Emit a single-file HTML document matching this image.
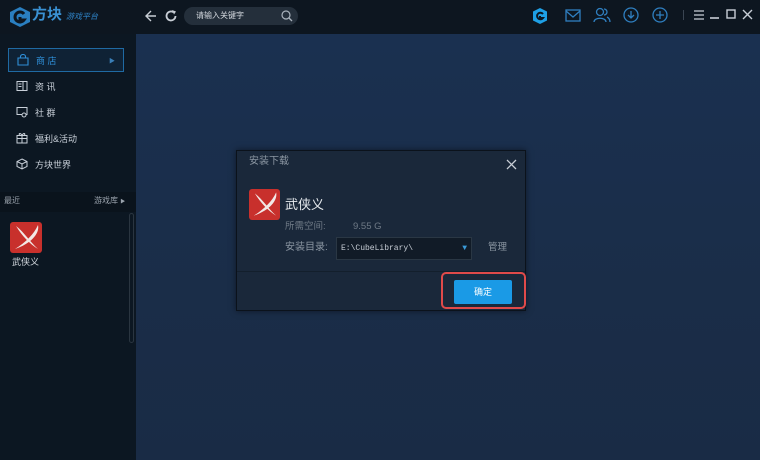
<!DOCTYPE html>
<html><head><meta charset="utf-8"><style>
*{margin:0;padding:0;box-sizing:border-box}
body{width:760px;height:460px;overflow:hidden;background:#1a2d48;font-family:"Liberation Sans","Noto Sans CJK SC",sans-serif;font-size:11px;color:#c5ccd6;position:relative}
.top{position:absolute;left:0;top:0;width:760px;height:34px;background:#0d1620}
.side{position:absolute;left:0;top:34px;width:136px;height:426px;background:#0c1722}
.main{position:absolute;left:136px;top:34px;width:624px;height:426px;background:linear-gradient(#1a3050,#1a2d48 60%,#192b45)}
.nav{position:absolute;left:8px;width:116px;height:24px;display:flex;align-items:center;padding-left:8px;font-size:9px;color:#c9d0d9}
.nav svg{margin-right:7px}
.abs{position:absolute;line-height:1.2}
.dlg{position:absolute;left:236px;top:150px;width:290px;height:161px;background:#1a283a;border:1px solid #0b121b;box-shadow:0 0 6px rgba(0,0,0,.5)}
.icon{background:#c8302c;border-radius:3px}
</style></head><body>
<div class="top"></div>
<div class="side"></div>
<div class="main"></div>
<svg class="abs" style="left:8px;top:6px" width="24" height="22" viewBox="0 0 24 22"><path d="M12 1 L22 6 V16 L12 21 L2 16 V6Z" fill="#2a7fc1"/><path d="M16 8 A5 5 0 1 0 16 14 H12 V11" stroke="#0d1620" stroke-width="3" fill="none"/></svg>
<div class="abs" style="left:32px;top:6px;font-size:15px;font-weight:bold;color:#3a91d3">方块</div>
<div class="abs" style="left:66px;top:12px;font-size:8px;color:#2f84c8;font-style:italic">游戏平台</div>
<svg class="abs" style="left:144px;top:9px" width="14" height="14" viewBox="0 0 14 14"><path d="M12 7H2M7 2L2 7L7 12" stroke="#c8ced6" stroke-width="1.4" fill="none"/></svg>
<svg class="abs" style="left:164px;top:9px" width="14" height="14" viewBox="0 0 14 14"><path d="M11.5 7A4.5 4.5 0 1 1 9.5 3.2" stroke="#c8ced6" stroke-width="1.8" fill="none"/><path d="M8 1L12 2.5L10 5.5Z" fill="#c8ced6"/></svg>
<div class="abs" style="left:184px;top:7px;width:114px;height:18px;border-radius:9px;background:#242f3b;font-size:8px;color:#d4d9df;padding:4px 0 0 12px">请输入关键字</div>
<svg class="abs" style="left:281px;top:10px" width="12" height="12" viewBox="0 0 12 12"><circle cx="5" cy="5" r="4" stroke="#aab3bd" stroke-width="1.2" fill="none"/><path d="M8 8L11 11" stroke="#aab3bd" stroke-width="1.3"/></svg>
<svg class="abs" style="left:531px;top:7px" width="18" height="18" viewBox="0 0 18 18"><path d="M9 1L16 4.5V13.5L9 17L2 13.5V4.5Z" fill="#1ea0e6"/><path d="M12 7A3.3 3.3 0 1 0 12 11H9V9" stroke="#0d1620" stroke-width="2" fill="none"/></svg>
<svg class="abs" style="left:565px;top:9px" width="16" height="13" viewBox="0 0 16 13"><rect x="1" y="1" width="14" height="11" stroke="#2f7fc0" stroke-width="1.3" fill="none"/><path d="M1 2L8 8L15 2" stroke="#2f7fc0" stroke-width="1.3" fill="none"/></svg>
<svg class="abs" style="left:593px;top:7px" width="18" height="16" viewBox="0 0 18 16"><circle cx="7" cy="5" r="3.5" stroke="#2f7fc0" stroke-width="1.3" fill="none"/><path d="M1 15C1 10 13 10 13 15M11 2A3 3 0 0 1 11 8M14 10C16 11 17 13 17 15" stroke="#2f7fc0" stroke-width="1.3" fill="none"/></svg>
<svg class="abs" style="left:623px;top:7px" width="16" height="16" viewBox="0 0 16 16"><circle cx="8" cy="8" r="7" stroke="#2f7fc0" stroke-width="1.3" fill="none"/><path d="M8 4V11M5 8L8 11L11 8" stroke="#2f7fc0" stroke-width="1.3" fill="none"/></svg>
<svg class="abs" style="left:652px;top:7px" width="16" height="16" viewBox="0 0 16 16"><circle cx="8" cy="8" r="7" stroke="#2f7fc0" stroke-width="1.3" fill="none"/><path d="M8 4V12M4 8H12" stroke="#2f7fc0" stroke-width="1.3"/></svg>
<div class="abs" style="left:683px;top:10px;width:1px;height:10px;background:#3a4552"></div>
<svg class="abs" style="left:693px;top:8px" width="64" height="14" viewBox="0 0 64 14"><path d="M1 3H11M1 7H11M1 11H11" stroke="#c8ced6" stroke-width="1.3"/><path d="M17 10H26" stroke="#c8ced6" stroke-width="1.6"/><rect x="34" y="2" width="8" height="8" stroke="#c8ced6" stroke-width="1.4" fill="none"/><path d="M50 2L59 11M59 2L50 11" stroke="#c8ced6" stroke-width="1.4"/></svg>
<div class="nav" style="top:48px;border:1px solid #1f6aa3;background:#0f2235;color:#2f8fd8"><svg width="12" height="12" viewBox="0 0 12 12"><path d="M1 4H11V11H1Z M3.5 4V2.5A2.5 2 0 0 1 8.5 2.5V4" stroke="#2f8fd8" stroke-width="1.1" fill="none"/></svg>商 店<span style="position:absolute;right:8px;font-size:6px;color:#3a7fb8">▶</span></div>
<div class="nav" style="top:74px"><svg width="12" height="12" viewBox="0 0 12 12"><rect x="1" y="1.5" width="10" height="9" stroke="#c9d0d9" fill="none"/><path d="M7 1.5V10.5M2.5 4H5.5M2.5 6.5H5.5" stroke="#c9d0d9"/></svg>资 讯</div>
<div class="nav" style="top:100px"><svg width="12" height="12" viewBox="0 0 12 12"><rect x="1" y="1.5" width="10" height="7" stroke="#c9d0d9" fill="none"/><circle cx="8" cy="9" r="2" stroke="#c9d0d9" fill="#0c1722"/></svg>社 群</div>
<div class="nav" style="top:126px"><svg width="12" height="12" viewBox="0 0 12 12"><rect x="1" y="3.5" width="10" height="7.5" stroke="#c9d0d9" fill="none"/><path d="M6 3.5V11M1 6.5H11M6 3.5C4 0 2 2 4 3.5M6 3.5C8 0 10 2 8 3.5" stroke="#c9d0d9" fill="none"/></svg>福利&amp;活动</div>
<div class="nav" style="top:152px"><svg width="12" height="12" viewBox="0 0 12 12"><path d="M6 1L11 3.5V8.5L6 11L1 8.5V3.5Z M1 3.5L6 6L11 3.5M6 6V11" stroke="#c9d0d9" fill="none"/></svg>方块世界</div>
<div class="abs" style="left:0;top:192px;width:136px;height:20px;background:#0a131c"></div>
<div class="abs" style="left:4px;top:196px;font-size:8px;color:#9aa3ad">最近</div>
<div class="abs" style="left:94px;top:196px;font-size:8px;color:#9aa3ad">游戏库 <span style="font-size:5px">▶</span></div>
<div class="abs" style="left:129px;top:213px;width:5px;height:130px;border:1px solid #2a3540;border-radius:3px"></div>
<div class="abs icon" style="left:10px;top:222px;width:32px;height:31px"><svg width="32" height="31" viewBox="0 0 32 31"><path d="M6 4C14 10 20 20 28 27C20 22 12 14 6 4Z" fill="#f2e8e6"/><path d="M28 3C30 12 20 22 5 27C16 20 24 12 28 3Z" fill="#f2e8e6"/></svg></div>
<div class="abs" style="left:12px;top:257px;font-size:9px;color:#d4d9df">武侠义</div>
<div class="dlg">
<div class="abs" style="left:12px;top:5px;font-size:10px;color:#8c97a3">安装下载</div>
<svg class="abs" style="left:269px;top:8px" width="11" height="11" viewBox="0 0 11 11"><path d="M1 1L10 10M10 1L1 10" stroke="#c8ced6" stroke-width="1.3"/></svg>
<div class="abs icon" style="left:12px;top:38px;width:31px;height:31px"><svg width="31" height="31" viewBox="0 0 32 31"><path d="M6 4C14 10 20 20 28 27C20 22 12 14 6 4Z" fill="#f2e8e6"/><path d="M28 3C30 12 20 22 5 27C16 20 24 12 28 3Z" fill="#f2e8e6"/></svg></div>
<div class="abs" style="left:48px;top:46px;font-size:13px;color:#e6eaee">武侠义</div>
<div class="abs" style="left:48px;top:70px;font-size:9.5px;color:#6f7a86">所需空间:</div>
<div class="abs" style="left:116px;top:70px;font-size:9.5px;color:#6f7a86">9.55 G</div>
<div class="abs" style="left:48px;top:91px;font-size:10px;color:#8c97a3">安装目录:</div>
<div class="abs" style="left:99px;top:86px;width:136px;height:23px;background:#111b27;border:1px solid #2a3744;font-family:'Liberation Mono',monospace;font-size:8px;color:#c8ced6;padding:6px 0 0 4px">E:\CubeLibrary\<span style="position:absolute;right:4px;top:6px;color:#3a9ad8;font-size:8px">▼</span></div>
<div class="abs" style="left:251px;top:91px;font-size:9.5px;color:#8c97a3">管理</div>
<div class="abs" style="left:0;top:120px;width:288px;height:1px;background:#131f2c"></div>
<div class="abs" style="left:204px;top:121px;width:85px;height:37px;border:2px solid #e04a4a;border-radius:5px"></div>
<div class="abs" style="left:217px;top:129px;width:58px;height:24px;background:#1a9ae6;border-radius:2px;color:#fff;font-size:9px;text-align:center;line-height:24px">确定</div>
</div>
</body></html>
